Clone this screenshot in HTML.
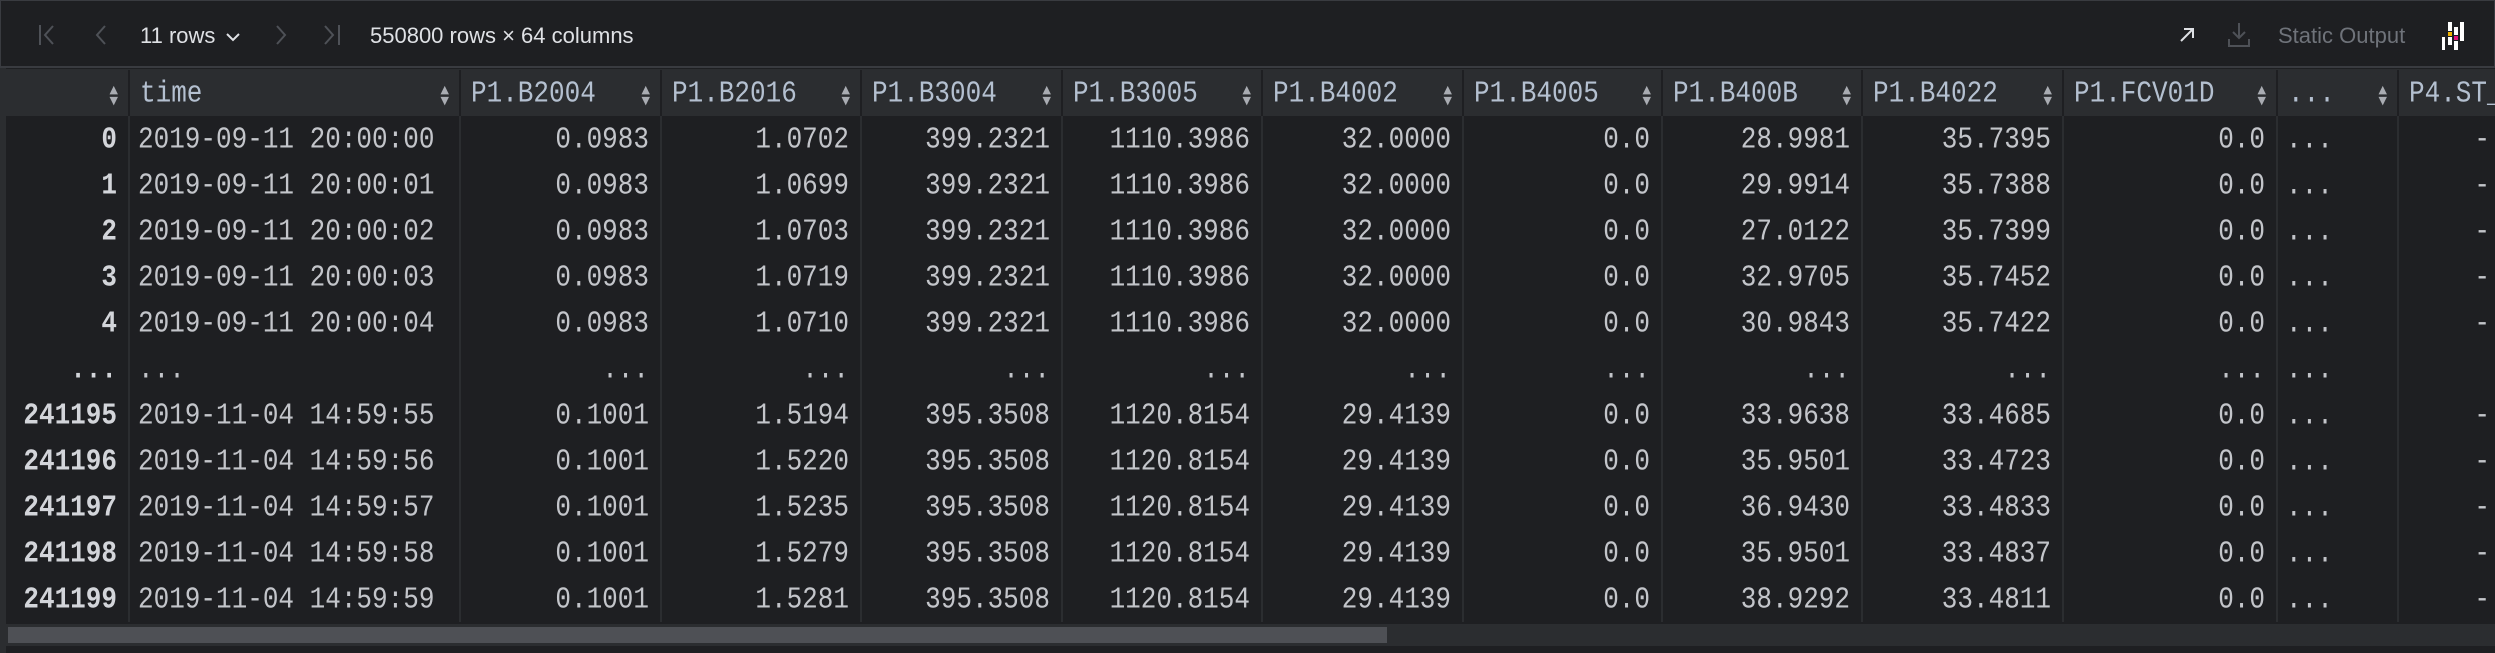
<!DOCTYPE html>
<html><head><meta charset="utf-8"><style>
*{margin:0;padding:0;box-sizing:border-box}
body{width:2495px;height:653px;background:#1e1f22;overflow:hidden;position:relative;font-family:"Liberation Sans",sans-serif}
.tb{position:absolute;left:0;top:0;width:2495px;height:68px;border:1px solid #393b40;border-bottom:2px solid #393b40;background:#1e1f22}
.t{position:absolute;color:#dfe1e5;font-size:22px;top:22px}
.hdr{position:absolute;left:6px;top:69px;height:47px;width:2489px;background:#2b2d30}
.c{position:absolute;height:46px;line-height:46px;font-family:"Liberation Mono",monospace;font-size:26px;color:#c3c5ca;white-space:nowrap;overflow:hidden;border-right:2px solid #2b2d30}
.c span.s{display:inline-block;transform:scaleY(1.18)}
.h{color:#b4c0d0;border-right:2px solid #1e1f22}
.r{text-align:right;padding-right:11px}
.l{padding-left:8px}
.b{font-weight:bold;color:#d3d5da}
.ar{position:absolute;right:10px;top:14px;font-size:11px;color:#a9acb2;line-height:11px;font-family:"DejaVu Sans",sans-serif}
</style></head><body>
<div class="tb">
<svg style="position:absolute;left:36px;top:22px" width="24" height="24" viewBox="0 0 24 24" fill="none" stroke="#4e5157" stroke-width="2"><path d="M3 2v20M16 3l-8 9 8 9"/></svg>
<svg style="position:absolute;left:90px;top:22px" width="20" height="24" viewBox="0 0 20 24" fill="none" stroke="#4e5157" stroke-width="2"><path d="M14 3l-8 9 8 9"/></svg>
<div class="t" style="left:139px">11 rows</div>
<svg style="position:absolute;left:224px;top:31px" width="16" height="10" viewBox="0 0 16 10" fill="none" stroke="#dfe1e5" stroke-width="2"><path d="M2 2l6 6 6-6"/></svg>
<svg style="position:absolute;left:270px;top:22px" width="20" height="24" viewBox="0 0 20 24" fill="none" stroke="#4e5157" stroke-width="2"><path d="M6 3l8 9-8 9"/></svg>
<svg style="position:absolute;left:318px;top:22px" width="24" height="24" viewBox="0 0 24 24" fill="none" stroke="#4e5157" stroke-width="2"><path d="M6 3l8 9-8 9M20 2v20"/></svg>
<div class="t" style="left:369px">550800 rows × 64 columns</div>
<svg style="position:absolute;left:2176px;top:24px" width="20" height="20" viewBox="0 0 20 20" fill="none" stroke="#dfe1e5" stroke-width="2"><path d="M4 16L16 4M7 4h9v9"/></svg>
<svg style="position:absolute;left:2226px;top:20px" width="24" height="27" viewBox="0 0 24 27" fill="none" stroke="#4e5157" stroke-width="2"><path d="M12 2v15M6 11l6 6 6-6M2 18v7h20v-7"/></svg>
<div class="t" style="left:2277px;color:#6f737a">Static Output</div>
<svg style="position:absolute;left:2440px;top:20px" width="25" height="30" viewBox="0 0 25 30"><rect x="1" y="16" width="3" height="13" fill="#fff"/><rect x="7" y="1" width="4" height="9" fill="#fff"/><rect x="7" y="11" width="4" height="4" fill="#f0b400"/><rect x="7" y="16" width="4" height="8" fill="#fff"/><rect x="13" y="6" width="4" height="8" fill="#fff"/><rect x="13" y="15" width="4" height="4" fill="#e0147a"/><rect x="13" y="20" width="4" height="9" fill="#fff"/><rect x="19" y="1" width="4" height="19" fill="#fff"/></svg>
</div>
<div style="position:absolute;left:0;top:68px;width:6px;height:585px;background:#2b2d30"></div>
<div class="hdr"></div>
<div id="grid"></div>
<div style="position:absolute;left:6px;top:624px;width:2489px;height:22px;background:#2b2d30"></div>
<div style="position:absolute;left:8px;top:627px;width:1379px;height:16px;background:#4e5055"></div>
<script>
var cols=[[6,130,'','r'],[130,461,'time','l'],[461,662,'P1.B2004','r'],[662,862,'P1.B2016','r'],[862,1063,'P1.B3004','r'],[1063,1263,'P1.B3005','r'],[1263,1464,'P1.B4002','r'],[1464,1663,'P1.B4005','r'],[1663,1863,'P1.B400B','r'],[1863,2064,'P1.B4022','r'],[2064,2278,'P1.FCV01D','r'],[2278,2399,'...','l'],[2399,2503,'P4.ST_','r']];
var rows=[
['0','2019-09-11 20:00:00','0.0983','1.0702','399.2321','1110.3986','32.0000','0.0','28.9981','35.7395','0.0','...','-'],
['1','2019-09-11 20:00:01','0.0983','1.0699','399.2321','1110.3986','32.0000','0.0','29.9914','35.7388','0.0','...','-'],
['2','2019-09-11 20:00:02','0.0983','1.0703','399.2321','1110.3986','32.0000','0.0','27.0122','35.7399','0.0','...','-'],
['3','2019-09-11 20:00:03','0.0983','1.0719','399.2321','1110.3986','32.0000','0.0','32.9705','35.7452','0.0','...','-'],
['4','2019-09-11 20:00:04','0.0983','1.0710','399.2321','1110.3986','32.0000','0.0','30.9843','35.7422','0.0','...','-'],
['...','...','...','...','...','...','...','...','...','...','...','...',''],
['241195','2019-11-04 14:59:55','0.1001','1.5194','395.3508','1120.8154','29.4139','0.0','33.9638','33.4685','0.0','...','-'],
['241196','2019-11-04 14:59:56','0.1001','1.5220','395.3508','1120.8154','29.4139','0.0','35.9501','33.4723','0.0','...','-'],
['241197','2019-11-04 14:59:57','0.1001','1.5235','395.3508','1120.8154','29.4139','0.0','36.9430','33.4833','0.0','...','-'],
['241198','2019-11-04 14:59:58','0.1001','1.5279','395.3508','1120.8154','29.4139','0.0','35.9501','33.4837','0.0','...','-'],
['241199','2019-11-04 14:59:59','0.1001','1.5281','395.3508','1120.8154','29.4139','0.0','38.9292','33.4811','0.0','...','-']];
var h='';
cols.forEach(function(c,i){
 var w=c[1]-c[0];
 h+='<div class="c h" style="left:'+c[0]+'px;top:70px;width:'+w+'px;padding-left:10px"><span class="s">'+c[2]+'</span>'+(i<12?'<span class="ar">&#9650;<br>&#9660;</span>':'')+'</div>';
 rows.forEach(function(r,j){
  var cls='c '+(i==1||i==11?'l':'r')+(i==0?' b':'');
  h+='<div class="'+cls+'" style="left:'+c[0]+'px;top:'+(116+j*46)+'px;width:'+w+'px"><span class="s">'+r[i]+'</span></div>';
 });
});
document.getElementById('grid').innerHTML=h;
</script>
</body></html>
